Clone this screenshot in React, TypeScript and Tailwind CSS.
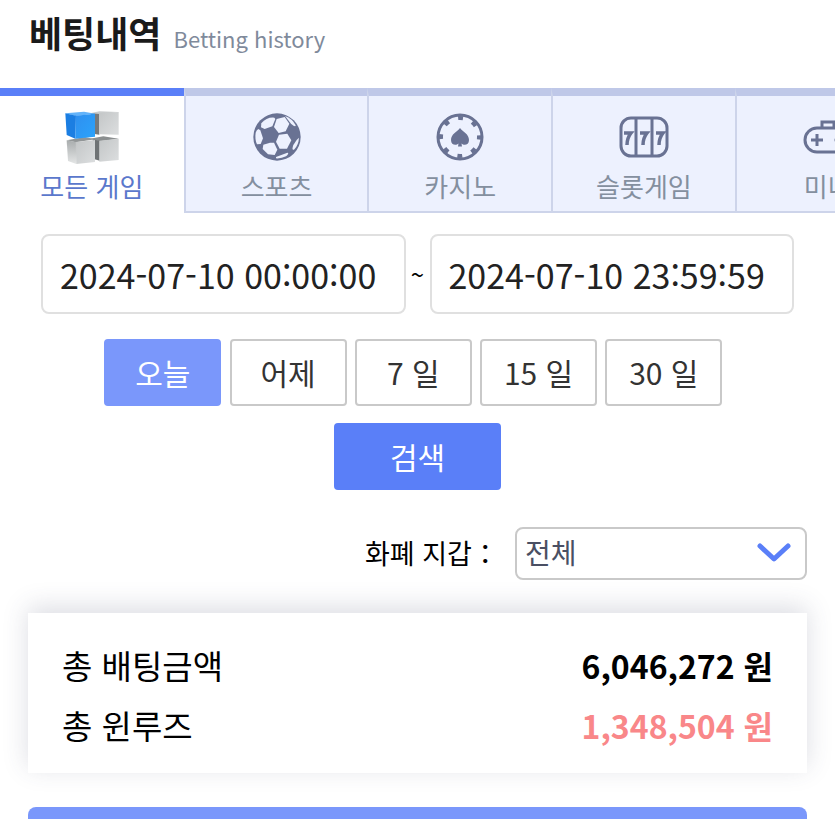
import { useState } from "react";
import clsx from "clsx";

function AllGamesIcon() {
  return (
    <svg viewBox="0 0 192 198" className="w-16 h-[66px]">
      <defs>
        <linearGradient id="blueFront" x1="0" y1="0" x2="1" y2="1">
          <stop offset="0" stopColor="#2f8fef" />
          <stop offset="1" stopColor="#2ba3fb" />
        </linearGradient>
        <linearGradient id="greyFront" x1="0" y1="0" x2="1" y2="1">
          <stop offset="0" stopColor="#c3c6c7" />
          <stop offset="1" stopColor="#dcdedf" />
        </linearGradient>
        <linearGradient id="greySide" x1="0" y1="0" x2="0" y2="1">
          <stop offset="0" stopColor="#a9adae" />
          <stop offset="1" stopColor="#e4e6e6" />
        </linearGradient>
      </defs>
      <path d="M90 28 L118 22 L174 24 L118 32 Z" fill="#c9cccd" />
      <path d="M92 28 L118 30 V92 L104 90 Z" fill="#767a7c" />
      <path d="M117 27 L176 24 V92 L117 91 Z" fill="url(#greyFront)" />
      <path d="M90 104 L130 97 L176 104 L118 112 Z" fill="#8b8f90" />
      <path d="M98 106 L119 110 V170 L104 166 Z" fill="#6f7375" />
      <path d="M118 110 L176 104 V168 L118 173 Z" fill="url(#greyFront)" />
      <path d="M20 109 L75 99 L106 106 L47 115 Z" fill="#929697" />
      <path d="M20 109 L48 114 L49 180 L24 171 Z" fill="url(#greySide)" />
      <path d="M47 114 L105 108 V174 L49 180 Z" fill="url(#greyFront)" />
      <path d="M16 28 L72 23 L106 29 L47 36 Z" fill="#62b3fa" />
      <path d="M16 28 L48 35 L46 104 L20 93 Z" fill="#1b7ee2" />
      <path d="M47 35 L105 29 V98 L46 104 Z" fill="url(#blueFront)" />
    </svg>
  );
}

function SportsIcon() {
  return (
    <svg viewBox="15 15 144 144" className="w-12 h-12">
      <circle cx="87" cy="87" r="71" fill="#697293" />
      <g fill="#edf1fe">
        <path d="M86 33 L110 27 L124 47 L113 70 L92 75 L78 57 Z" />
        <path d="M40 46 Q56 27 79 29 L82 33 L73 55 L50 63 L39 58 Z" />
        <path d="M23 74 Q25 66 31 63 L37 67 L45 91 L38 108 L27 109 Q20 94 23 74 Z" />
        <path d="M93 80 L118 77 L130 97 L117 122 L95 122 L84 101 Z" />
        <path d="M46 110 L66 104 L78 104 L88 125 L80 141 L60 139 L44 123 Z" />
        <path d="M111 24 Q133 32 143 52 Q143 59 129 47 Z" />
        <path d="M153 89 Q152 111 138 125 Q130 128 136 111 L146 96 Z" />
        <path d="M84 147 L118 134 Q125 135 114 145 Q100 152 84 151 Z" />
      </g>
    </svg>
  );
}

function CasinoIcon() {
  return (
    <svg viewBox="0 0 48 48" className="w-12 h-12" fill="#697293">
      <circle cx="24" cy="24" r="22" fill="none" stroke="#697293" strokeWidth="3" />
      <circle
        cx="24"
        cy="24"
        r="19"
        fill="none"
        stroke="#697293"
        strokeWidth="4"
        strokeDasharray="5 9.923"
        strokeDashoffset="2.5"
      />
      <path d="M24 15 C27 19 33 21 33 27 C33 32 28 33 25.500 30.500 L26 33.500 H22 L22.500 30.500 C20 33 15 32 15 27 C15 21 21 19 24 15 Z" />
    </svg>
  );
}

function SlotIcon() {
  return (
    <svg viewBox="0 0 50 48" className="w-[50px] h-12" fill="none" stroke="#697293">
      <rect x="2" y="5" width="46" height="38" rx="10" strokeWidth="3" />
      <path d="M17 5 V43 M33 5 V43" strokeWidth="3" />
      <path
        d="M5 20 H12 Q8 25 8 32 M21 20 H28 Q24 25 24 32 M37 20 H44 Q40 25 40 32"
        strokeWidth="3.500"
      />
    </svg>
  );
}

function MiniGameIcon() {
  return (
    <svg viewBox="0 0 50 48" className="w-[50px] h-12" fill="none" stroke="#697293" strokeWidth="3">
      <rect x="2" y="15" width="46" height="24" rx="12" />
      <path d="M19 15 V9 H31 V15" />
      <path d="M14 21 V33 M8 27 H20" />
      <circle cx="34" cy="27" r="1" />
      <circle cx="40" cy="27" r="1" />
    </svg>
  );
}

const TABS = [
  { id: "all", label: "모든 게임", icon: AllGamesIcon },
  { id: "sports", label: "스포츠", icon: SportsIcon },
  { id: "casino", label: "카지노", icon: CasinoIcon },
  { id: "slot", label: "슬롯게임", icon: SlotIcon },
  { id: "mini", label: "미니", icon: MiniGameIcon },
];

const RANGES = ["오늘", "어제", "7 일", "15 일", "30 일"];

interface TotalRowProps {
  label: string;
  value: string;
  negative?: boolean;
}

function TotalRow({ label, value, negative }: TotalRowProps) {
  return (
    <div className="flex items-center justify-between leading-[60px]">
      <dt className="text-[33px]">{label}</dt>
      <dd className={clsx("text-[32px] font-bold", negative && "text-[#f98789]")}>{value}</dd>
    </div>
  );
}

export default function App() {
  const [tab, setTab] = useState("all");
  const [range, setRange] = useState("오늘");
  const [from, setFrom] = useState("2024-07-10 00:00:00");
  const [to, setTo] = useState("2024-07-10 23:59:59");

  return (
    <div
      lang="ko"
      className="flex h-screen flex-col overflow-hidden bg-white font-['Noto_Sans_CJK_KR',sans-serif] text-black"
    >
      <header className="flex h-[88px] shrink-0 items-baseline gap-3 px-[29px] pt-[6px]">
        <h1 className="text-[36px] leading-[52px] font-bold text-[#1a1a1a]">베팅내역</h1>
        <span className="text-[22px] text-[#7f8a9b]">Betting history</span>
      </header>

      <nav className="flex shrink-0 overflow-hidden">
        {TABS.map(({ id, label, icon: Icon }) => (
          <button
            key={id}
            type="button"
            onClick={() => setTab(id)}
            className={clsx(
              "flex h-[125px] w-[22%] shrink-0 flex-col items-center border-t-8 pt-2",
              tab === id
                ? "border-[#5a7ff8] bg-white text-[#5b78cc]"
                : "border-t-[#bfc8e8] border-b-2 border-l-2 border-b-[#cdd4ea] border-l-[#cdd4ea] bg-[#edf1fe] text-[#848f9f]"
            )}
          >
            <span className="flex h-[66px] items-center">
              <Icon />
            </span>
            <span className="text-[26px] leading-8">{label}</span>
          </button>
        ))}
      </nav>

      <form className="shrink-0" onSubmit={(e) => e.preventDefault()}>
        <div className="flex items-center px-[41px] pt-[21px]">
          <input
            type="text"
            aria-label="시작일"
            value={from}
            onChange={(e) => setFrom(e.target.value)}
            className="h-20 w-0 flex-1 rounded-lg border-2 border-[#e0e0e0] px-[17px] text-[34px] text-[#222]"
          />
          <span className="w-6 text-center text-2xl">~</span>
          <input
            type="text"
            aria-label="종료일"
            value={to}
            onChange={(e) => setTo(e.target.value)}
            className="h-20 w-0 flex-1 rounded-lg border-2 border-[#e0e0e0] px-[17px] text-[34px] text-[#222]"
          />
        </div>

        <div className="mt-[25px] flex justify-center">
          {RANGES.map((item) => (
            <button
              key={item}
              type="button"
              onClick={() => setRange(item)}
              className={clsx(
                "mr-[1%] h-[67px] w-[14%] rounded border-2 text-[30px]",
                range === item
                  ? "border-[#7a97fb] bg-[#7a97fb] text-white"
                  : "border-[#c9c9c9] bg-white text-[#333]"
              )}
            >
              {item}
            </button>
          ))}
        </div>

        <div className="mt-[17px] flex justify-center">
          <button type="submit" className="h-[67px] w-1/5 rounded bg-[#5a7ff8] text-[30px] text-white">
            검색
          </button>
        </div>
      </form>

      <div className="mt-[37px] flex shrink-0 items-center justify-end px-7">
        <label htmlFor="wallet" className="mr-4 text-[27px]">
          화폐 지갑：
        </label>
        <div className="relative w-3/8">
          <select
            id="wallet"
            className="h-[53px] w-full appearance-none rounded-lg border-2 border-[#c9c9c9] bg-white px-2 pb-1 text-[28px] leading-9 text-[#4a4f63]"
          >
            <option>전체</option>
          </select>
          <svg
            viewBox="0 0 34 20"
            className="pointer-events-none absolute top-4 right-4 h-5 w-[34px]"
            fill="none"
            stroke="#5a7ff8"
            strokeWidth="5"
            strokeLinecap="round"
            strokeLinejoin="round"
          >
            <path d="M3 3 L17 16 L31 3" />
          </svg>
        </div>
      </div>

      <dl className="mx-7 mt-[33px] shrink-0 bg-white px-[34px] pt-[22px] pb-[18px] shadow-[0_-6px_24px_rgba(60,65,100,0.18)]">
        <TotalRow label="총 배팅금액" value="6,046,272 원" />
        <TotalRow label="총 윈루즈" value="1,348,504 원" negative />
      </dl>

      <div className="mx-7 mt-[34px] h-[67px] shrink-0 rounded-lg bg-[#7a97fb]" />
    </div>
  );
}
